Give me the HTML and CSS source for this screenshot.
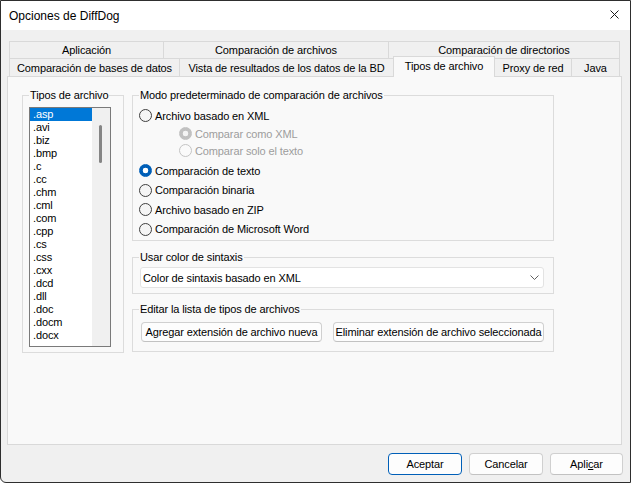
FILE: index.html
```html
<!DOCTYPE html>
<html lang="es">
<head>
<meta charset="utf-8">
<title>Opciones de DiffDog</title>
<link rel="stylesheet" href="styles.css">
</head>
<body>
<div class="window">
  <div class="titlebar">
    <span class="title">Opciones de DiffDog</span>
    <svg class="close" viewBox="0 0 9 9" width="9" height="9"><path d="M0.5 0.5L8.5 8.5M8.5 0.5L0.5 8.5" stroke="#1a1a1a" stroke-width="1" fill="none"/></svg>
  </div>
  <div class="main">
    <div class="tabstrip">
      <div class="tabrow row1">
        <div class="tab t-aplic">Aplicación</div>
        <div class="tab t-comparch">Comparación de archivos</div>
        <div class="tab t-compdir">Comparación de directorios</div>
      </div>
      <div class="tabrow row2">
        <div class="tab t-bd">Comparación de bases de datos</div>
        <div class="tab t-vista">Vista de resultados de los datos de la BD</div>
        <div class="tab t-tipos active">Tipos de archivo</div>
        <div class="tab t-proxy">Proxy de red</div>
        <div class="tab t-java">Java</div>
      </div>
    </div>
    <div class="panel">
      <fieldset class="group types">
        <legend>Tipos de archivo</legend>
        <div class="listbox">
          <div class="items">
            <div class="item selected">.asp</div>
            <div class="item">.avi</div>
            <div class="item">.biz</div>
            <div class="item">.bmp</div>
            <div class="item">.c</div>
            <div class="item">.cc</div>
            <div class="item">.chm</div>
            <div class="item">.cml</div>
            <div class="item">.com</div>
            <div class="item">.cpp</div>
            <div class="item">.cs</div>
            <div class="item">.css</div>
            <div class="item">.cxx</div>
            <div class="item">.dcd</div>
            <div class="item">.dll</div>
            <div class="item">.doc</div>
            <div class="item">.docm</div>
            <div class="item">.docx</div>
          </div>
          <div class="scrollbar"><div class="thumb"></div></div>
        </div>
      </fieldset>
      <div class="rightcol">
        <fieldset class="group mode">
          <legend>Modo predeterminado de comparación de archivos</legend>
          <div class="radio first"><span class="dot"></span><span>Archivo basado en XML</span></div>
          <div class="radio sub disabled"><span class="dot checked"></span><span>Comparar como XML</span></div>
          <div class="radio sub disabled"><span class="dot"></span><span>Comparar solo el texto</span></div>
          <div class="radio after-sub"><span class="dot checked"></span><span>Comparación de texto</span></div>
          <div class="radio"><span class="dot"></span><span>Comparación binaria</span></div>
          <div class="radio"><span class="dot"></span><span>Archivo basado en ZIP</span></div>
          <div class="radio"><span class="dot"></span><span>Comparación de Microsoft Word</span></div>
        </fieldset>
        <fieldset class="group syntax">
          <legend>Usar color de sintaxis</legend>
          <div class="combo">
            <span>Color de sintaxis basado en XML</span>
            <svg class="chev" viewBox="0 0 9 5" width="9" height="5"><path d="M0.5 0.5L4.5 4.5L8.5 0.5" stroke="#606060" stroke-width="1" fill="none"/></svg>
          </div>
        </fieldset>
        <fieldset class="group edit">
          <legend>Editar la lista de tipos de archivos</legend>
          <div class="btnrow">
            <div class="btn b-add">Agregar extensión de archivo nueva</div>
            <div class="btn b-del">Eliminar extensión de archivo seleccionada</div>
          </div>
        </fieldset>
      </div>
    </div>
    <div class="footer">
      <div class="btn fbtn default">Aceptar</div>
      <div class="btn fbtn">Cancelar</div>
      <div class="btn fbtn apply">Apli<u>c</u>ar</div>
    </div>
  </div>
</div>
</body>
</html>
```

FILE: styles.css
```css
* { box-sizing: border-box; }

body {
  margin: 0;
  background: #ffffff;
}

.window {
  width: 631px;
  height: 483px;
  border: 1px solid #2e2e2e;
  border-bottom-left-radius: 6px;
  background: #f0f0f0;
  display: flex;
  flex-direction: column;
  font-family: "Liberation Sans", Arial, sans-serif;
  font-size: 11px;
  letter-spacing: -0.12px;
  color: #000;
  overflow: hidden;
}

/* Title bar */
.titlebar {
  height: 29px;
  flex: none;
  background: #ffffff;
  display: flex;
  align-items: center;
  padding-left: 8px;
}
.title {
  font-size: 12px;
  letter-spacing: 0;
  color: #000;
}
.close {
  margin-left: auto;
  margin-right: 11px;
  margin-bottom: 2px;
}

.main {
  flex: 1;
  display: flex;
  flex-direction: column;
}

/* Tabs */
.tabstrip {
  margin: 11px 0 0 8px;
  display: flex;
  flex-direction: column;
}
.tabrow { display: flex; }
.row1 { height: 17px; }
.row2 { height: 18px; align-items: flex-end; }

.tab {
  height: 100%;
  border: 1px solid #d9d9d9;
  border-bottom: none;
  background: #f0f0f0;
  display: flex;
  align-items: center;
  justify-content: center;
  white-space: nowrap;
}
.tab + .tab { margin-left: -1px; }
.row2 .tab { height: 18px; }

.t-aplic { width: 155px; }
.t-comparch { width: 226px; }
.t-compdir { width: 232px; }
.t-bd { width: 171px; }
.t-vista { width: 215px; }
.t-tipos { width: 102px; }
.t-proxy { width: 78px; }
.t-java { width: 49px; }

.row2 .tab.active {
  height: 21px;
  margin-bottom: -1px;
  padding-bottom: 2px;
  background: #f9f9f9;
  position: relative;
  z-index: 1;
}

/* Panel */
.panel {
  margin-left: 6px;
  width: 615px;
  height: 369px;
  flex: none;
  border: 1px solid #d9d9d9;
  background: #f9f9f9;
  display: flex;
  align-items: flex-start;
  gap: 8px;
  padding: 11px 0 0 14px;
}

.group {
  margin: 0;
  min-width: 0;
  border: 1px solid #dcdcdc;
}
.group legend {
  padding: 0 1px;
  line-height: 15px;
  height: 15px;
}

/* File types list */
.types {
  width: 102px;
  height: 265px;
  padding: 4px 6px 0 6px;
}
.listbox {
  width: 82px;
  height: 240px;
  border: 1px solid #7a7a7a;
  background: #ffffff;
  display: flex;
}
.items {
  flex: 1;
  overflow: hidden;
}
.item {
  height: 13px;
  line-height: 13px;
  padding-left: 3px;
  white-space: nowrap;
}
.item.selected {
  background: #0078d7;
  color: #ffffff;
}
.scrollbar {
  width: 18px;
  flex: none;
  background: #f0f0f0;
}
.thumb {
  width: 3px;
  height: 38px;
  margin: 17px 0 0 7px;
  border-radius: 2px;
  background: #858585;
}

/* Right column */
.rightcol {
  width: 422px;
  display: flex;
  flex-direction: column;
}

.mode {
  padding: 3px 6px 1px 6px;
}
.radio {
  display: flex;
  align-items: center;
  gap: 3px;
  height: 19.5px;
  white-space: nowrap;
}
.radio.first { height: 19px; }
.radio.sub {
  height: 17px;
  padding-left: 40px;
}
.radio.after-sub { margin-top: 2px; }

.dot {
  width: 13px;
  height: 13px;
  flex: none;
  border-radius: 50%;
  border: 1px solid #3f3f3f;
  background: #f5f5f5;
}
.dot.checked {
  border-color: #005fb8;
  background: radial-gradient(circle, #ffffff 0 2.6px, #005fb8 3.1px);
}
.disabled { color: #9d9d9d; }
.disabled .dot {
  border-color: #c4c4c4;
  background: #fafafa;
}
.disabled .dot.checked {
  border-color: #c1c1c1;
  background: radial-gradient(circle, #f4f4f4 0 2.6px, #c1c1c1 3.1px);
}

.syntax {
  margin-top: 9px;
  padding: 2px 8px 5px 6px;
}
.combo {
  margin-left: 1px;
  width: 404px;
  height: 21px;
  border: 1px solid #e3e3e3;
  border-radius: 3px;
  background: #ffffff;
  display: flex;
  align-items: center;
  padding-left: 2px;
}
.chev {
  margin-left: auto;
  margin-right: 4px;
}

.edit {
  margin-top: 8px;
  padding: 5px 8px 9px 6px;
}
.btnrow {
  margin-left: 2px;
  display: flex;
  gap: 11px;
}

.btn {
  height: 20px;
  border: 1px solid #d0d0d0;
  border-bottom-color: #c2c2c2;
  border-radius: 4px;
  background: #fdfdfd;
  display: flex;
  align-items: center;
  justify-content: center;
  white-space: nowrap;
}
.b-add { width: 181px; }
.b-del { width: 211px; }

/* Footer */
.footer {
  margin-top: 8px;
  padding-right: 7px;
  display: flex;
  justify-content: flex-end;
  gap: 7px;
}
.fbtn {
  width: 74px;
  height: 22px;
}
.fbtn.apply { width: 73px; }
.fbtn.default {
  border-color: #005fb8;
}
```
